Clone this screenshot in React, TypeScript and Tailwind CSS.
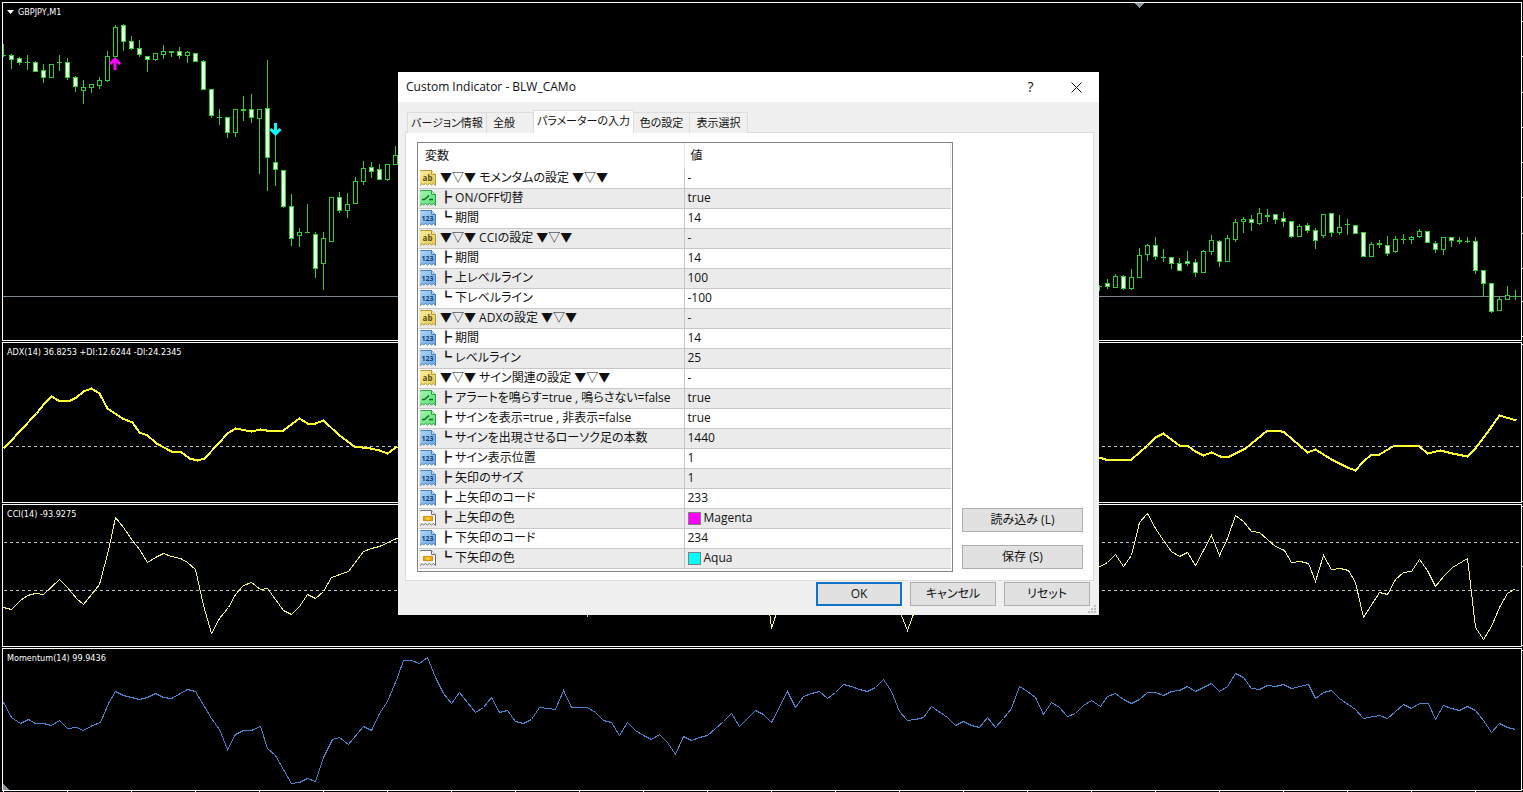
import { useState } from "react";
import type { ReactNode } from "react";

type ParamKind = "text" | "bool" | "int" | "color";

// [open, high, low, close] as chart rows, one bar every 8px
type Bar = [number, number, number, number];

const BAR_STEP = 8;

const BARS_LEFT: Bar[] = [
  [55, 44, 57, 55], [55, 54, 69, 60], [58, 57, 65, 63], [62, 55, 70, 62], [62, 61, 72, 72],
  [70, 64, 83, 78], [78, 64, 78, 64], [62, 55, 71, 62], [62, 58, 80, 78], [77, 76, 92, 87],
  [91, 80, 104, 87], [88, 84, 93, 84], [86, 77, 89, 80], [81, 51, 82, 56], [57, 25, 57, 27],
  [25, 24, 51, 42], [41, 36, 50, 49], [48, 40, 57, 55], [56, 56, 72, 60], [60, 53, 61, 53],
  [55, 45, 59, 51], [51, 51, 57, 53], [51, 47, 59, 56], [56, 51, 63, 52], [53, 53, 62, 62],
  [61, 60, 90, 90], [89, 89, 118, 116], [117, 109, 125, 117], [117, 117, 138, 133], [133, 109, 137, 109],
  [109, 96, 121, 111], [109, 94, 123, 118], [119, 109, 174, 109], [108, 60, 191, 158], [162, 125, 186, 170],
  [170, 170, 208, 207], [206, 194, 246, 239], [236, 228, 247, 232], [232, 204, 233, 232], [234, 232, 278, 269],
  [264, 232, 290, 238], [242, 197, 242, 197], [197, 192, 213, 211], [211, 193, 218, 204], [204, 177, 204, 181],
  [182, 161, 185, 168], [167, 162, 178, 172], [169, 164, 180, 180], [180, 164, 181, 164], [165, 146, 165, 155],
];

const BARS_RIGHT: Bar[] = [
  [286, 285, 291, 286], [283, 279, 289, 287], [288, 274, 288, 276], [276, 275, 290, 289], [289, 269, 290, 277],
  [278, 248, 278, 255], [255, 244, 261, 245], [245, 237, 260, 257], [257, 249, 262, 257], [257, 257, 269, 264],
  [263, 258, 271, 271], [261, 251, 266, 264], [262, 259, 277, 273], [273, 250, 273, 251], [252, 235, 255, 240],
  [241, 240, 267, 262], [262, 235, 262, 238], [240, 219, 242, 222], [222, 217, 233, 219], [219, 215, 231, 223],
  [224, 208, 225, 213], [215, 209, 222, 217], [214, 214, 224, 220], [218, 212, 227, 222], [221, 221, 238, 237],
  [237, 224, 237, 226], [225, 223, 233, 231], [230, 228, 249, 241], [236, 214, 238, 214], [213, 213, 237, 233],
  [233, 215, 235, 227], [224, 219, 235, 224], [225, 225, 234, 234], [232, 232, 257, 257], [257, 242, 257, 244],
  [243, 240, 248, 245], [245, 236, 256, 254], [252, 236, 253, 239], [239, 234, 244, 239], [240, 236, 244, 237],
  [237, 229, 238, 231], [231, 231, 243, 243], [243, 241, 253, 250], [250, 237, 255, 237], [237, 237, 247, 241],
  [240, 237, 244, 242], [241, 237, 243, 241], [241, 237, 274, 271], [270, 270, 297, 284], [283, 283, 313, 312],
  [311, 296, 311, 299], [300, 286, 300, 295], [296, 290, 300, 296],
];

const ADX_LEFT =
  "3,448 10,441 20,430 36,413 44,403 51,396 58,400 70,400 76,397 83,391 91,388 99,393 107,408 122,418 132,422 139,432 147,435 156,443 171,451 180,451 189,458 197,460 204,458 218,443 227,433 235,428 251,431 260,429 272,431 283,430 291,424 299,418 307,423 315,423 323,420 339,435 354,446 370,448 379,450 387,453 397,446";
const ADX_RIGHT =
  "1099,457 1105,459 1131,459 1147,445 1155,437 1163,433 1179,445 1187,445 1195,451 1203,455 1211,452 1220,456 1229,456 1245,448 1267,430 1278,430 1284,432 1307,452 1315,449 1331,459 1347,467 1355,470 1363,461 1371,454 1379,454 1394,445 1411,445 1419,446 1427,453 1440,450 1452,453 1467,456 1475,448 1492,425 1499,415 1516,420";
const CCI_LINE =
  "3,607 11,609 20,600 27,595 35,593 43,594 59,579 67,587 76,598 83,604 99,584 108,550 115,517 123,527 132,540 139,549 147,562 155,557 163,553 171,556 180,558 187,562 195,569 203,605 211,633 219,618 228,607 235,594 243,585 251,582 260,589 267,588 283,610 291,614 299,606 307,594 315,598 323,591 331,577 348,571 363,551 371,548 379,546 396,538 580,600 587,615 594,600 763,560 771,628 780,600 895,600 907,630 918,600 1100,566 1107,562 1115,554 1123,566 1131,555 1139,522 1147,513 1155,528 1163,540 1171,551 1179,556 1187,552 1195,565 1211,535 1219,555 1227,538 1235,515 1243,521 1251,531 1259,532 1275,546 1284,550 1291,562 1300,561 1308,563 1315,581 1323,555 1331,569 1340,568 1348,570 1355,582 1363,617 1379,592 1387,594 1395,579 1403,572 1411,571 1419,559 1427,570 1435,586 1443,576 1452,567 1467,558 1475,627 1483,639 1491,626 1499,607 1507,593 1515,588";
const MOMENTUM_LINE =
  "3,702 11,717 20,723 28,719 35,723 43,723 51,725 59,720 67,728 76,727 83,730 92,725 100,722 108,703 115,691 123,695 139,699 147,697 155,693 163,697 171,698 180,693 187,689 195,691 211,718 219,729 227,749 235,734 243,730 251,730 260,726 267,748 275,755 291,783 299,782 307,778 315,781 323,757 332,739 339,737 348,744 363,726 371,730 379,713 387,701 397,677 403,660 411,660 419,663 427,657 435,677 443,693 451,703 459,692 467,702 475,712 483,707 491,697 499,712 507,710 515,721 523,723 531,719 539,707 555,709 563,690 571,707 587,707 595,712 603,720 611,722 619,735 627,722 635,730 643,735 651,739 659,734 667,742 675,754 683,736 691,740 699,737 707,735 723,721 731,713 739,726 755,710 763,714 771,722 787,691 795,707 803,696 811,693 819,691 827,698 835,692 843,684 851,686 859,689 867,691 875,687 883,679 891,691 899,711 907,720 915,719 923,717 931,706 947,717 955,725 963,721 971,725 979,727 987,717 995,727 1003,718 1011,708 1019,686 1027,691 1035,697 1043,714 1051,702 1059,707 1067,716 1075,713 1083,705 1091,700 1100,706 1107,696 1115,693 1123,699 1131,703 1139,699 1147,692 1155,692 1163,695 1171,691 1179,690 1187,686 1195,691 1211,683 1219,691 1227,686 1235,673 1243,677 1251,688 1259,689 1267,685 1275,686 1283,684 1291,688 1308,684 1315,698 1323,692 1331,690 1339,698 1355,709 1363,718 1379,715 1387,718 1403,704 1411,708 1419,703 1428,703 1435,719 1443,705 1451,708 1459,710 1467,706 1475,710 1483,720 1491,732 1499,723 1507,727 1515,729";

const PRICE_TICKS = [21, 56, 92, 127, 162, 197, 233, 268, 301, 336];
const TIME_TICKS = Array.from({ length: 24 }, (_, i) => 3 + i * 64);

const TABS = [
  { label: "バージョン情報", width: "w-20" },
  { label: "全般", width: "w-[47px] pr-3" },
  { label: "パラメーターの入力", width: "w-[101px]" },
  { label: "色の設定", width: "w-14" },
  { label: "表示選択", width: "w-[58px]" },
];

const PARAMS: { kind: ParamKind; name: string; value: string; swatch?: string }[] = [
  { kind: "text", name: "▼▽▼ モメンタムの設定 ▼▽▼", value: "-" },
  { kind: "bool", name: "┣ ON/OFF切替", value: "true" },
  { kind: "int", name: "┗ 期間", value: "14" },
  { kind: "text", name: "▼▽▼ CCIの設定 ▼▽▼", value: "-" },
  { kind: "int", name: "┣ 期間", value: "14" },
  { kind: "int", name: "┣ 上レベルライン", value: "100" },
  { kind: "int", name: "┗ 下レベルライン", value: "-100" },
  { kind: "text", name: "▼▽▼ ADXの設定 ▼▽▼", value: "-" },
  { kind: "int", name: "┣ 期間", value: "14" },
  { kind: "int", name: "┗ レベルライン", value: "25" },
  { kind: "text", name: "▼▽▼ サイン関連の設定 ▼▽▼", value: "-" },
  { kind: "bool", name: "┣ アラートを鳴らす=true , 鳴らさない=false", value: "true" },
  { kind: "bool", name: "┣ サインを表示=true , 非表示=false", value: "true" },
  { kind: "int", name: "┗ サインを出現させるローソク足の本数", value: "1440" },
  { kind: "int", name: "┣ サイン表示位置", value: "1" },
  { kind: "int", name: "┣ 矢印のサイズ", value: "1" },
  { kind: "int", name: "┣ 上矢印のコード", value: "233" },
  { kind: "color", name: "┣ 上矢印の色", value: "Magenta", swatch: "bg-[#ff00ff]" },
  { kind: "int", name: "┣ 下矢印のコード", value: "234" },
  { kind: "color", name: "┗ 下矢印の色", value: "Aqua", swatch: "bg-[#00ffff]" },
];

const ICON_COLORS: Record<ParamKind, { from: string; to: string; stroke: string }> = {
  text: { from: "#fbf0a0", to: "#e2c95a", stroke: "#b39a35" },
  bool: { from: "#a6f7b0", to: "#5bdc74", stroke: "#2f9e48" },
  int: { from: "#b5d9fa", to: "#6aa5e3", stroke: "#4a7fb8" },
  color: { from: "#ffffff", to: "#f0f0f0", stroke: "#6e6e6e" },
};

function Candles({ bars, start }: { bars: Bar[]; start: number }) {
  return (
    <g fill="#32cd32">
      {bars.map(([open, high, low, close], i) => {
        const x = start + i * BAR_STEP;
        const top = Math.min(open, close);
        const height = Math.max(Math.abs(close - open), 1);
        return (
          <g key={x}>
            <rect x={x} y={high} width={1} height={low - high} />
            <rect x={x - 2} y={top} width={5} height={height} />
            {height > 2 && (
              <rect x={x - 1} y={top + 1} width={3} height={height - 2} fill={close > open ? "#e6ffe2" : "#000"} />
            )}
          </g>
        );
      })}
    </g>
  );
}

function Level({ y }: { y: number }) {
  return <line x1={4} x2={1520} y1={y + 0.5} y2={y + 0.5} stroke="#c0c0c0" strokeDasharray="3 3" />;
}

// Points name whole pixels, so the stroke runs through pixel centres
function Series({ points, color, width = 1 }: { points: string; color: string; width?: number }) {
  return <polyline points={points} stroke={color} strokeWidth={width} transform="translate(0.5 0.5)" />;
}

function ChartPane({
  title,
  grow,
  top,
  height,
  ticks,
  menu,
  children,
}: {
  title: string;
  grow: string;
  top: number;
  height: number;
  ticks: number[];
  menu?: boolean;
  children: ReactNode;
}) {
  return (
    <section className={`flex min-h-0 basis-0 ${grow}`}>
      <div className="relative min-w-0 flex-1 border border-white">
        <svg
          className="block h-full w-full"
          viewBox={`3 ${top} 1518 ${height}`}
          preserveAspectRatio="none"
          shapeRendering="crispEdges"
          fill="none"
        >
          {children}
        </svg>
        <h2 className="absolute left-1 top-[3px] flex items-center gap-1 text-[9px] leading-3 text-white">
          {menu && (
            <svg className="h-1 w-[7px]" viewBox="0 0 7 4" fill="#fff">
              <path d="M0 0h7L3.5 4z" />
            </svg>
          )}
          {title}
        </h2>
      </div>
      <svg className="block h-full w-px" viewBox={`0 ${top - 1} 1 ${height + 2}`} preserveAspectRatio="none">
        {ticks.map((y) => (
          <rect key={y} y={y} width={1} height={1} fill="#fff" />
        ))}
      </svg>
    </section>
  );
}

function ParamIcon({ kind }: { kind: ParamKind }) {
  const { from, to, stroke } = ICON_COLORS[kind];
  return (
    <svg className="size-4 shrink-0" viewBox="0 0 16 16" aria-hidden="true">
      <defs>
        <linearGradient id={`page-${kind}`} x1="0" y1="0" x2="1" y2="1">
          <stop offset="0" stopColor={from} />
          <stop offset="1" stopColor={to} />
        </linearGradient>
        <linearGradient id="page-bar">
          <stop offset="0" stopColor="#f08a10" />
          <stop offset="0.5" stopColor="#ffe030" />
          <stop offset="1" stopColor="#f08a10" />
        </linearGradient>
      </defs>
      <path
        d="M2 .5h9.5l4 4v11l-2-2-2 1.500-2-1.500-2 1.500-2-1.500-2 1.500-1.500-1.500-1.500 2-2-.5V2Q.5.5 2 .5z"
        fill={`url(#page-${kind})`}
        stroke={stroke}
      />
      <path d="M11.5.5v4h4" fill={from} stroke={stroke} />
      {kind === "text" && (
        <text x="7.5" y="11" textAnchor="middle" fontSize="8" fontWeight="700" fill="#5c4c10">
          ab
        </text>
      )}
      {kind === "int" && (
        <text x="7.5" y="11" textAnchor="middle" fontSize="7" fontWeight="700" fill="#123f6e">
          123
        </text>
      )}
      {kind === "bool" && <path d="M2 9.5h2.5l4.500-4M9 9.5h4" fill="none" stroke="#0c6b25" strokeWidth="1.5" />}
      {kind === "color" && <rect x="3.5" y="6.5" width="9" height="4" fill="url(#page-bar)" stroke="#e58a10" />}
    </svg>
  );
}

function PushButton({ children, primary, className }: { children: ReactNode; primary?: boolean; className: string }) {
  return (
    <button
      type="button"
      className={`flex h-6 items-center justify-center bg-[#e1e1e1] ${
        primary ? "border-2 border-[#0f74c8]" : "border border-[#adadad]"
      } ${className}`}
    >
      {children}
    </button>
  );
}

function IndicatorDialog() {
  const [tab, setTab] = useState(2);

  return (
    <div
      role="dialog"
      aria-labelledby="dialog-title"
      className="absolute left-[398px] top-[72px] w-[701px] bg-[#f0f0f0] text-xs text-[#111] [font-feature-settings:'palt']"
    >
      <header className="flex h-[30px] items-center bg-white pl-2">
        <h1 id="dialog-title" className="flex-1">
          Custom Indicator - BLW_CAMo
        </h1>
        <button type="button" aria-label="Help" className="w-[45px] text-center text-sm">
          ?
        </button>
        <button type="button" aria-label="Close" className="flex w-[46px] justify-center">
          <svg className="size-[11px]" viewBox="0 0 11 11" stroke="#111" fill="none">
            <path d="M.5.5l10 10M10.5.5l-10 10" />
          </svg>
        </button>
      </header>

      <div className="pl-[7px] pr-[5px] pt-2">
        <div role="tablist" className="flex h-[23px] items-end pl-0.5 text-[11px]">
          {TABS.map(({ label, width }, i) => (
            <button
              key={label}
              type="button"
              role="tab"
              aria-selected={tab === i}
              onClick={() => setTab(i)}
              className={`shrink-0 whitespace-nowrap border-[#dcdcdc] text-center ${width} ${
                tab === i
                  ? "z-10 -ml-px h-[23px] border border-b-0 bg-white pb-0.5"
                  : "h-[21px] border-r border-t bg-[#f0f0f0] first:border-l"
              }`}
            >
              {label}
            </button>
          ))}
        </div>

        <div role="tabpanel" className="-mt-px flex gap-[9px] border border-[#dcdcdc] bg-white pb-2 pl-[11px] pr-2.5 pt-[9px]">
          <div className="min-w-0 flex-1 border border-[#828282] px-px pb-0.5">
            <table className="w-full table-fixed border-collapse">
              <colgroup>
                <col className="w-[265px]" />
                <col />
              </colgroup>
              <thead>
                <tr className="h-[25px]">
                  <th className="border-r border-[#e5e5e5] p-0 pl-1.5 text-left font-normal">変数</th>
                  <th className="border-r border-[#e5e5e5] p-0 pl-1.5 text-left font-normal">値</th>
                </tr>
              </thead>
              <tbody>
                {PARAMS.map(({ kind, name, value, swatch }, i) => (
                  <tr key={i} className="h-5 border-b border-[#c8c8c8] even:bg-[#ebebeb]">
                    <td className="border-r border-[#c8c8c8] p-0">
                      <div className="flex h-[19px] items-center gap-1 whitespace-pre pl-px">
                        <ParamIcon kind={kind} />
                        {name}
                      </div>
                    </td>
                    <td className="p-0">
                      <div className="flex h-[19px] items-center gap-[3px] pl-[3px]">
                        {swatch && <span className={`size-[13px] border border-[#808080] ${swatch}`} />}
                        {value}
                      </div>
                    </td>
                  </tr>
                ))}
              </tbody>
            </table>
          </div>
          <div className="flex w-[121px] flex-col justify-end gap-[13px] pb-[3px]">
            <PushButton className="w-full">読み込み (L)</PushButton>
            <PushButton className="w-full">保存 (S)</PushButton>
          </div>
        </div>
      </div>

      <footer className="relative flex justify-end gap-2 pb-[9px] pr-[9px] pt-px">
        <PushButton primary className="w-[86px]">
          OK
        </PushButton>
        <PushButton className="w-[86px]">キャンセル</PushButton>
        <PushButton className="w-[86px]">リセット</PushButton>
        <svg className="absolute bottom-0.5 right-[3px] size-2" viewBox="0 0 8 8" fill="#bfbfbf">
          <path d="M6 0h2v2H6zM3 3h2v2H3zM6 3h2v2H6zM0 6h2v2H0zM3 6h2v2H3zM6 6h2v2H6z" />
        </svg>
      </footer>
    </div>
  );
}

export default function App() {
  return (
    <div className="relative h-screen overflow-hidden bg-black font-['Open_Sans','Noto_Sans_CJK_JP',sans-serif]">
      <main className="flex h-full flex-col gap-px pl-0.5 pt-0.5 font-['DejaVu_Sans_Condensed','Noto_Sans',sans-serif]">
        <ChartPane title="GBPJPY,M1" grow="grow-[339]" top={3} height={337} ticks={PRICE_TICKS} menu>
          <rect x={3} y={296} width={1518} height={1} fill="#7d8790" />
          <Candles bars={BARS_LEFT} start={3} />
          <Candles bars={BARS_RIGHT} start={1099} />
          <path d="M115 60v10M110 64l5-5 5 5" stroke="#ff00ff" strokeWidth={3} shapeRendering="auto" />
          <path d="M275.5 123v11M270.5 129l5 5 5-5" stroke="#00ffff" strokeWidth={3} shapeRendering="auto" />
          <path d="M1134 3h10l-5 5z" fill="#8a949c" />
        </ChartPane>
        <ChartPane title="ADX(14) 36.8253 +DI:12.6244 -DI:24.2345" grow="grow-[161]" top={343} height={159} ticks={[344, 501]}>
          <Level y={446} />
          <Series points={ADX_LEFT} color="#ffff30" width={2} />
          <Series points={ADX_RIGHT} color="#ffff30" width={2} />
        </ChartPane>
        <ChartPane title="CCI(14) -93.9275" grow="grow-[143]" top={505} height={141} ticks={[506, 566, 645]}>
          <Level y={542} />
          <Level y={590} />
          <Series points={CCI_LINE} color="#f4f47c" />
        </ChartPane>
        <ChartPane title="Momentum(14) 99.9436" grow="grow-[143]" top={649} height={141} ticks={[650, 789]}>
          <Series points={MOMENTUM_LINE} color="#4a86d0" />
          <path d="M3 784v6h6z" fill="#8a949c" />
        </ChartPane>
        <svg className="-mt-px block h-px w-full shrink-0" viewBox="2 0 1521 1" preserveAspectRatio="none">
          {TIME_TICKS.map((x) => (
            <rect key={x} x={x} width={1} height={1} fill="#fff" />
          ))}
        </svg>
      </main>
      <IndicatorDialog />
    </div>
  );
}
